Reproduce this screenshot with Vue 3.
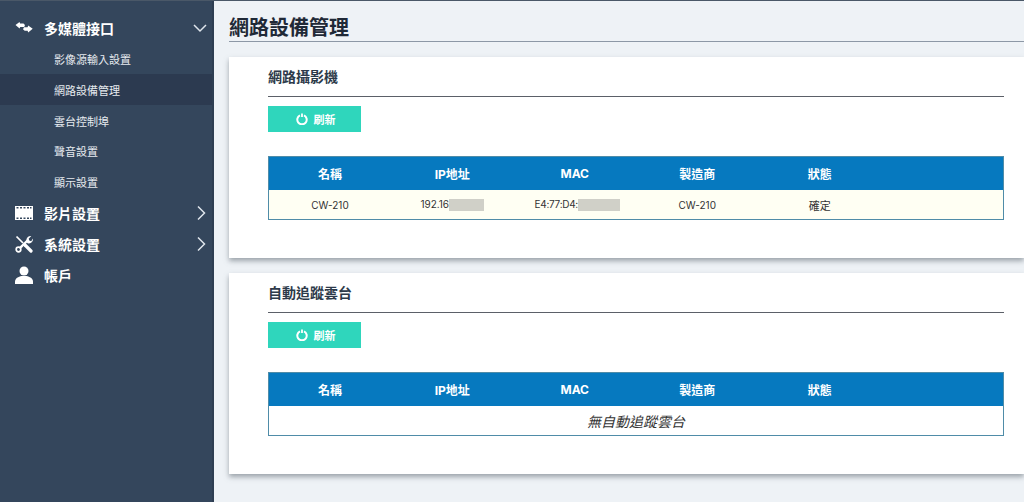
<script setup>
const menuTop = [
  { label: '影片設置', icon: 'film' },
  { label: '系統設置', icon: 'tools' },
  { label: '帳戶', icon: 'user' }
]
const subs = ['影像源輸入設置', '網路設備管理', '雲台控制埠', '聲音設置', '顯示設置']
const cols = ['名稱', 'IP地址', 'MAC', '製造商', '狀態', '']
</script>

<template>
  <div class="page">
    <aside class="side">
      <div class="top">
        <svg class="ico" viewBox="0 0 18 18"><path d="M.5 6 4.500 3l.6 1.500h3.400L10 6l-.8 2H5.200l-.6 1.600zM17.700 9.800 13.200 13.500l-.6-1.700H9.700L8 10.200l1-2h3.600l.6-1.600z" fill="#fff"/></svg>
        <span>多媒體接口</span>
        <svg class="chev" viewBox="0 0 14 14"><path d="M1 4l6 6 6-6" fill="none" stroke="#dfe5ec" stroke-width="1.500"/></svg>
      </div>
      <div v-for="s in subs" :key="s" class="sub" :class="{ on: s === '網路設備管理' }">{{ s }}</div>
      <div v-for="m in menuTop" :key="m.label" class="top">
        <svg v-if="m.icon === 'film'" class="ico" viewBox="0 0 18 14"><path fill-rule="evenodd" d="M0 0h18v14H0zM1.500 1v1.500h2V1zm3.500 0v1.500h2V1zm3.500 0v1.500h2V1zm3.500 0v1.500h2V1zm3 0v1.500h1.500V1zM1.500 11.500V13h2v-1.500zm3.500 0V13h2v-1.500zm3.500 0V13h2v-1.500zm3.500 0V13h2v-1.500zm3 0V13h1.500v-1.500z" fill="#fff"/></svg>
        <svg v-else-if="m.icon === 'tools'" class="ico" viewBox="0 0 18 18">
          <path d="M1.500 1.500 8 8" fill="none" stroke="#fff" stroke-width="1.700"/>
          <path d="M10 10l6 6" fill="none" stroke="#fff" stroke-width="3.200" stroke-linecap="round"/>
          <path d="M4.600 13.400 12.500 5.500" fill="none" stroke="#fff" stroke-width="2.400"/>
          <circle cx="3.500" cy="14.500" r="2.300" fill="none" stroke="#fff" stroke-width="1.700"/>
          <path d="M11.300 5.500c0-2.600 2.200-4.800 5-4.500l-2.600 2.700.6 1.900 1.900.6L18 3.600c.4 2.800-1.900 5-4.500 5-1.300 0-2.200-1.700-2.200-3.100z" fill="#fff"/>
        </svg>
        <svg v-else class="ico" viewBox="0 0 18 18"><circle cx="9" cy="5" r="4.500" fill="#fff"/><path d="M0 18v-2.500c0-3 3.500-5 6.500-5.500h5c3 .5 6.500 2.500 6.500 5.500V18z" fill="#fff"/></svg>
        <span>{{ m.label }}</span>
        <svg v-if="m.icon !== 'user'" class="chev" viewBox="0 0 14 14"><path d="M5 .5l6.500 6.500-6.500 6.500" fill="none" stroke="#dfe5ec" stroke-width="1.500"/></svg>
      </div>
    </aside>

    <main class="main">
      <h1 class="title">網路設備管理</h1>

      <section class="card">
        <h2 class="ctitle">網路攝影機</h2>
        <button class="btn">
          <svg class="pw" viewBox="0 0 12 12"><path d="M4 2.400a4.700 4.700 0 1 0 4 0" fill="none" stroke="#fff" stroke-width="2"/><path d="M6 .5v3.500" stroke="#fff" stroke-width="1.800"/></svg>
          刷新
        </button>
        <table class="tb">
          <thead><tr><th v-for="c in cols" :key="c">{{ c }}</th></tr></thead>
          <tbody>
            <tr class="row">
              <td>CW-210</td>
              <td>192.16<i class="mask ipm"></i></td>
              <td class="mac">E4:77:D4:<i class="mask macm"></i></td>
              <td>CW-210</td>
              <td class="cjk">確定</td>
              <td></td>
            </tr>
          </tbody>
        </table>
      </section>

      <section class="card">
        <h2 class="ctitle">自動追蹤雲台</h2>
        <button class="btn">
          <svg class="pw" viewBox="0 0 12 12"><path d="M4 2.400a4.700 4.700 0 1 0 4 0" fill="none" stroke="#fff" stroke-width="2"/><path d="M6 .5v3.500" stroke="#fff" stroke-width="1.800"/></svg>
          刷新
        </button>
        <table class="tb">
          <thead><tr><th v-for="c in cols" :key="c">{{ c }}</th></tr></thead>
          <tbody>
            <tr class="empty"><td colspan="6">無自動追蹤雲台</td></tr>
          </tbody>
        </table>
      </section>
    </main>
  </div>
</template>

<style>
html, body { margin: 0; background: #eef2f6; overflow: hidden; }
</style>

<style scoped>
.page {
  display: flex;
  width: 1024px;
  height: 502px;
  overflow: hidden;
  font-family: Inter, "Noto Sans CJK TC", sans-serif;
  background: #eef2f6;
  border-top: 1px solid #4a5868;
  box-sizing: border-box;
}
.side {
  width: 214px;
  flex: none;
  box-sizing: border-box;
  padding-top: 11px;
  background: #34465c;
  border-right: 2px solid #2e3e52;
  color: #fff;
}
.top {
  height: 31px;
  display: flex;
  align-items: center;
  padding: 0 5px 0 15px;
  font-size: 14px;
  font-weight: 700;
}
.top span { margin-left: 11px; flex: 1; }
.sub + .top { margin-top: 1px; }
.ico { width: 18px; height: 18px; flex: none; }
.chev { width: 14px; height: 14px; flex: none; }
.sub {
  height: 30.8px;
  line-height: 35px;
  padding-left: 54px;
  font-size: 11px;
  color: #e6eaef;
}
.sub.on { background: #2c3a50; }
.main { flex: 1; min-width: 0; padding: 0 0 0 15px; }
.title {
  margin: 0 0 15px;
  height: 27px;
  padding-top: 13px;
  line-height: 28px;
  font-size: 20px;
  font-weight: 700;
  color: #1f2937;
  border-bottom: 1px solid #8d98a6;
}
.card {
  height: 201px;
  box-sizing: border-box;
  margin-bottom: 15px;
  padding: 0 20px 0 39px;
  background: #fff;
  box-shadow: 0 3px 5px rgba(90, 100, 110, .55);
}
.ctitle {
  margin: 0;
  height: 39px;
  line-height: 40px;
  font-size: 14px;
  font-weight: 700;
  color: #2d3a4a;
  border-bottom: 1px solid #5b6068;
}
.btn {
  display: flex;
  align-items: center;
  justify-content: center;
  gap: 6px;
  width: 93px;
  height: 26px;
  margin-top: 9px;
  padding: 0 0 0 2px;
  border: 0;
  background: #2fd6bc;
  color: #fff;
  font: 700 11px Inter, "Noto Sans CJK TC", sans-serif;
}
.pw { width: 12px; height: 12px; }
.tb {
  width: 736px;
  margin-top: 24px;
  border-collapse: collapse;
  table-layout: fixed;
  border: 1px solid #4f8ca8;
}
.tb th {
  height: 33px;
  padding: 0;
  background: #0679bf;
  color: #fff;
  font-size: 12px;
  font-weight: 700;
}
.row td {
  height: 29px;
  padding: 0;
  background: #fffff3;
  color: #333;
  font-size: 10px;
  text-align: center;
}
.row .mac { padding-left: 5px; letter-spacing: -.3px; }
.row .cjk { font-size: 11px; }
.mask {
  display: inline-block;
  height: 12px;
  vertical-align: -3px;
  background: #d0d0c8;
}
.ipm { width: 35px; }
.macm { width: 42px; }
.empty td {
  height: 29px;
  padding: 0;
  background: #fff;
  color: #333;
  font-size: 14px;
  font-style: italic;
  text-align: center;
}
</style>
